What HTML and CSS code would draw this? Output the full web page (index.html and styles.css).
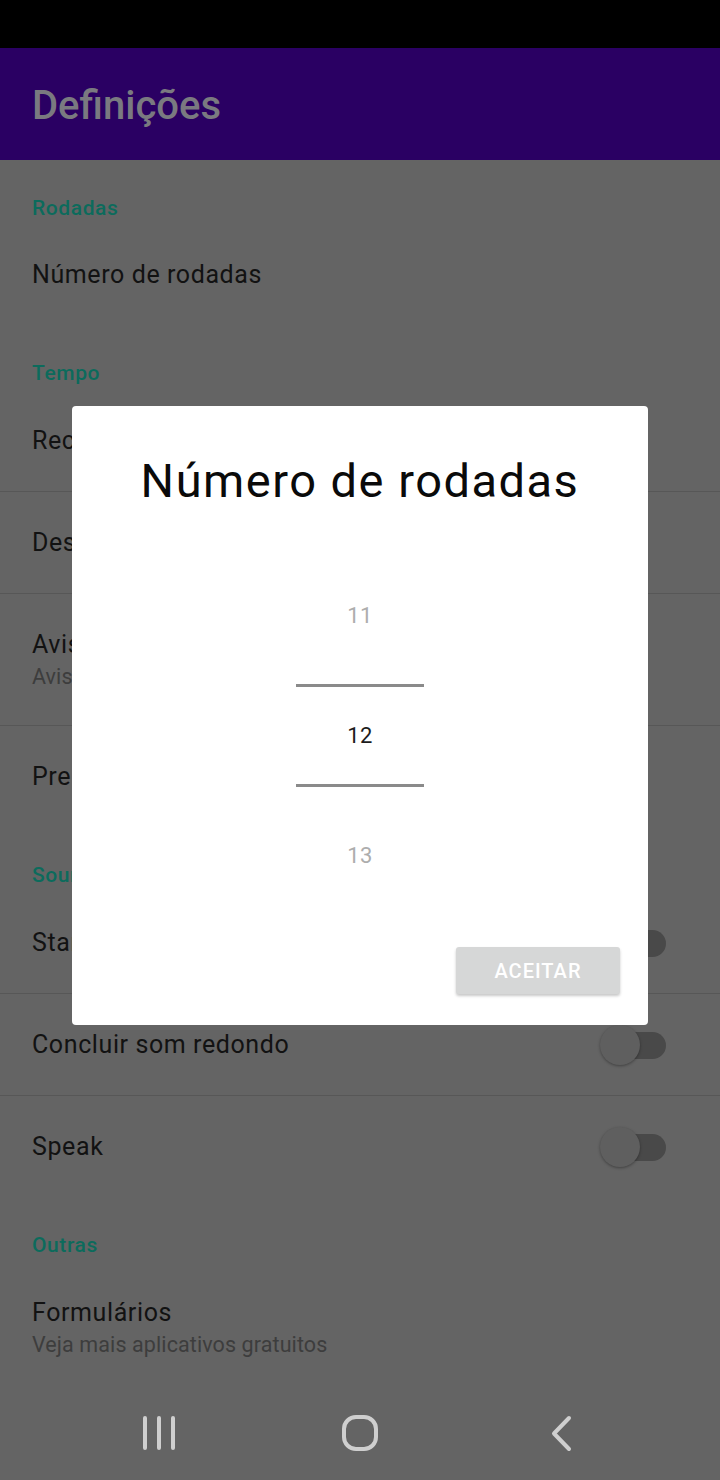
FILE: index.html
```html
<!DOCTYPE html>
<html lang="pt">
<head>
<meta charset="utf-8">
<title>Definições</title>
<link rel="stylesheet" href="styles.css">
</head>
<body>
<div class="screen">
  <div class="status"></div>
  <header class="appbar"><h1 class="appbar-title">Definições</h1></header>
  <main class="list">
    <div class="category">Rodadas</div>
    <div class="row row-first"><div class="row-text"><div class="title">Número de rodadas</div></div></div>

    <div class="category">Tempo</div>
    <div class="row divided"><div class="row-text"><div class="title">Recuperação</div></div></div>
    <div class="row divided"><div class="row-text"><div class="title">Descanso</div></div></div>
    <div class="row row-two divided"><div class="row-text"><div class="title">Aviso de contagem</div><div class="subtitle">Aviso antes do fim</div></div></div>
    <div class="row"><div class="row-text"><div class="title">Preparação</div></div></div>

    <div class="category">Sounds</div>
    <div class="row divided"><div class="row-text"><div class="title">Start round sound</div></div><div class="switch"><span class="track"></span><span class="thumb"></span></div></div>
    <div class="row divided"><div class="row-text"><div class="title">Concluir som redondo</div></div><div class="switch"><span class="track"></span><span class="thumb"></span></div></div>
    <div class="row"><div class="row-text"><div class="title">Speak</div></div><div class="switch"><span class="track"></span><span class="thumb"></span></div></div>

    <div class="category">Outras</div>
    <div class="row row-two"><div class="row-text"><div class="title">Formulários</div><div class="subtitle">Veja mais aplicativos gratuitos</div></div></div>
  </main>
  <nav class="navbar">
    <span class="nav-btn">
      <svg width="40" height="40" viewBox="0 0 40 40"><path d="M6 4v30M20 4v30M34 4v30" stroke="#cfcfcf" stroke-width="4" stroke-linecap="round" fill="none"/></svg>
    </span>
    <span class="nav-btn">
      <svg width="40" height="40" viewBox="0 0 40 40"><rect x="4" y="3" width="32" height="32" rx="12" ry="12" stroke="#cfcfcf" stroke-width="4" fill="none"/></svg>
    </span>
    <span class="nav-btn">
      <svg width="40" height="40" viewBox="0 0 40 40"><path d="M28 4L13 19.5L28 35" stroke="#cfcfcf" stroke-width="4" stroke-linecap="round" stroke-linejoin="round" fill="none"/></svg>
    </span>
  </nav>

  <div class="dialog">
    <h2 class="dialog-title">Número de rodadas</h2>
    <div class="picker">
      <div class="pick pick-prev">11</div>
      <div class="pick pick-current">12</div>
      <div class="pick pick-next">13</div>
    </div>
    <div class="dialog-actions">
      <button class="btn-accept">ACEITAR</button>
    </div>
  </div>
</div>
</body>
</html>
```

FILE: styles.css
```css
* { box-sizing: border-box; }

html, body {
  margin: 0;
  padding: 0;
}

body {
  width: 720px;
  height: 1480px;
  overflow: hidden;
  background: #646464;
  font-family: Roboto, "Noto Sans", "Liberation Sans", sans-serif;
}

.screen {
  position: relative;
  width: 720px;
  height: 1480px;
  display: flex;
  flex-direction: column;
  background: #646464;
}

.status {
  height: 48px;
  background: #000;
  flex: none;
}

.appbar {
  height: 112px;
  flex: none;
  background: #2a0063;
  display: flex;
  align-items: center;
  padding-left: 32px;
}

.appbar-title {
  margin: 0;
  font-size: 40px;
  font-weight: 500;
  color: #7a7a80;
  line-height: 48px;
  position: relative;
  top: 2px;
}

.list {
  flex: 1;
  display: flex;
  flex-direction: column;
}

.category {
  height: 65px;
  padding: 34px 32px 0 32px;
  font-size: 21px;
  font-weight: 500;
  line-height: 28px;
  letter-spacing: 0.6px;
  color: #0c6b5c;
}

.row {
  height: 101px;
  padding: 0 54px 0 32px;
  display: flex;
  align-items: center;
  justify-content: space-between;
}

.row-first { height: 100px; }

.row.divided {
  height: 102px;
  border-bottom: 1px solid #575757;
}

.row-two {
  height: 131px;
  align-items: flex-start;
  padding-top: 33px;
}

.row-two.divided { height: 132px; }

.title {
  font-size: 25px;
  line-height: 36px;
  letter-spacing: 0.6px;
  color: #121212;
}

.row:not(.row-two) .title { line-height: 32px; }

.subtitle {
  font-size: 21.5px;
  line-height: 28px;
  letter-spacing: 0.1px;
  color: #3d3d3d;
}

.switch {
  position: relative;
  width: 66px;
  height: 40px;
  flex: none;
}

.switch .track {
  position: absolute;
  left: 10px;
  top: 7px;
  width: 56px;
  height: 27px;
  border-radius: 14px;
  background: #494949;
}

.switch .thumb {
  position: absolute;
  left: 0;
  top: 0;
  width: 40px;
  height: 40px;
  border-radius: 50%;
  background: #5f5f5f;
  box-shadow: 0 1px 3px rgba(0, 0, 0, 0.35);
}

.navbar {
  height: 87px;
  flex: none;
  display: flex;
  justify-content: center;
  align-items: flex-start;
  padding-top: 21px;
  gap: 161px;
}

.nav-btn {
  width: 40px;
  height: 40px;
  display: block;
}

.nav-btn svg { display: block; }

/* Dialog */
.dialog {
  position: absolute;
  left: 72px;
  top: 406px;
  width: 576px;
  height: 619px;
  background: #fff;
  border-radius: 4px;
  display: flex;
  flex-direction: column;
  align-items: center;
  padding-top: 47px;
}

.dialog-title {
  margin: 0;
  font-size: 47px;
  font-weight: 400;
  line-height: 56px;
  letter-spacing: 1.5px;
  color: #0a0a0a;
  white-space: nowrap;
}

.picker {
  margin-top: 47px;
  width: 128px;
  display: flex;
  flex-direction: column;
}

.pick {
  text-align: center;
  font-size: 22px;
  letter-spacing: 0.5px;
}

.pick-prev {
  height: 128px;
  line-height: 120px;
  color: #adadad;
}

.pick-current {
  height: 103px;
  line-height: 97px;
  border-top: 3px solid #8a8a8a;
  border-bottom: 3px solid #8a8a8a;
  color: #1c1c1c;
}

.pick-next {
  height: 129px;
  padding-top: 9px;
  line-height: 120px;
  color: #adadad;
}

.dialog-actions {
  align-self: stretch;
  display: flex;
  justify-content: flex-end;
  padding: 31px 28px 0 0;
}

.btn-accept {
  width: 164px;
  height: 47px;
  border: none;
  border-radius: 3px;
  background: #d6d7d7;
  color: #fff;
  font-family: Roboto, "Noto Sans", "Liberation Sans", sans-serif;
  font-size: 20px;
  font-weight: 500;
  letter-spacing: 1px;
  box-shadow: 0 2px 3px rgba(0, 0, 0, 0.22);
  padding: 0;
}
```
